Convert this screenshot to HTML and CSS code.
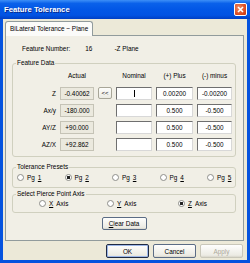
FILE: index.html
```html
<!DOCTYPE html>
<html lang="en">
<head>
    <meta charset="UTF-8">
    <title>Feature Tolerance</title>
    <link rel="stylesheet" href="styles.css">
</head>
<body>
    <div class="window">
        <div class="titlebar">
            <span class="title">Feature Tolerance</span>
            <span class="close">
                <svg width="7" height="7" viewBox="0 0 7 7"><path d="M1 1L6 6M6 1L1 6" stroke="#fff" stroke-width="1.6"/></svg>
            </span>
        </div>

        <div class="client">
            <div class="tabs">
                <span class="tab">BiLateral Tolerance ~ Plane</span>
            </div>

            <div class="panel">
                <div class="feature-number">
                    <span>Feature Number:</span>
                    <span class="fn-value">16</span>
                    <span class="fn-name">-Z Plane</span>
                </div>

                <fieldset class="group">
                    <legend>Feature Data</legend>
                    <div class="data-grid">
                        <span></span>
                        <span class="head">Actual</span>
                        <span></span>
                        <span class="head">Nominal</span>
                        <span class="head">(+) Plus</span>
                        <span class="head">(-) minus</span>

                        <span class="axis">Z</span>
                        <span class="box ro">-0.40062</span>
                        <span class="pick">&lt;&lt;</span>
                        <span class="box edit"><span class="caret"></span></span>
                        <span class="box edit">0.00200</span>
                        <span class="box edit">-0.00200</span>

                        <span class="axis">Ax/y</span>
                        <span class="box ro">-180.000</span>
                        <span></span>
                        <span class="box edit"></span>
                        <span class="box edit">0.500</span>
                        <span class="box edit">-0.500</span>

                        <span class="axis">AY/Z</span>
                        <span class="box ro">+90.000</span>
                        <span></span>
                        <span class="box edit"></span>
                        <span class="box edit">0.500</span>
                        <span class="box edit">-0.500</span>

                        <span class="axis">AZ/X</span>
                        <span class="box ro">+92.862</span>
                        <span></span>
                        <span class="box edit"></span>
                        <span class="box edit">0.500</span>
                        <span class="box edit">-0.500</span>
                    </div>
                </fieldset>

                <fieldset class="group presets">
                    <legend>Tolerance Presets</legend>
                    <div class="radio-row">
                        <span class="radio"><i></i>Pg <u>1</u></span>
                        <span class="radio checked"><i></i>Pg <u>2</u></span>
                        <span class="radio"><i></i>Pg <u>3</u></span>
                        <span class="radio"><i></i>Pg <u>4</u></span>
                        <span class="radio"><i></i>Pg <u>5</u></span>
                    </div>
                </fieldset>

                <fieldset class="group pierce">
                    <legend>Select Pierce Point Axis</legend>
                    <div class="radio-row">
                        <span class="radio"><i></i><u>X</u> Axis</span>
                        <span class="radio"><i></i><u>Y</u> Axis</span>
                        <span class="radio checked"><i></i><u>Z</u> Axis</span>
                    </div>
                </fieldset>

                <div class="clear-row">
                    <span class="btn clear"><u>C</u>lear Data</span>
                </div>
            </div>

            <div class="buttons">
                <span class="btn default">OK</span>
                <span class="btn">Cancel</span>
                <span class="btn disabled">Apply</span>
            </div>
        </div>
    </div>
</body>
</html>
```

FILE: styles.css
```css
* {
    box-sizing: border-box;
}
body {
    margin: 0;
    font-family: "Liberation Sans", Arial, sans-serif;
    font-size: 6.4px;
    color: #000;
}
.window {
    width: 250px;
    height: 263px;
    background: #0553df;
    display: flex;
    flex-direction: column;
}
.titlebar {
    height: 19px;
    display: flex;
    align-items: center;
    justify-content: space-between;
    padding: 0 3px 0 4px;
    background: linear-gradient(#3d8ff7 0%, #0a61ea 18%, #0257e6 50%, #0153e3 80%, #003fc4 100%);
}
.title {
    color: #fff;
    font-weight: bold;
    font-size: 7.7px;
    text-shadow: 1px 1px #0b2a8a;
}
.close {
    width: 13px;
    height: 13px;
    border: 1px solid #fff;
    border-radius: 2px;
    background: radial-gradient(circle at 35% 35%, #f08a62, #d9461d 70%, #c23a12);
    display: flex;
    align-items: center;
    justify-content: center;
}
.client {
    flex: 1;
    margin: 0 3px 3px;
    background: #ece9d8;
    padding: 2px 0 2px 2px;
    display: flex;
    flex-direction: column;
}
.tabs {
    display: flex;
    height: 14px;
}
.tab {
    height: 15px;
    padding: 0 4px;
    border: 1px solid #919b9c;
    border-bottom: none;
    border-radius: 3px 3px 0 0;
    background: #fbfbf9;
    line-height: 13px;
    white-space: nowrap;
    position: relative;
    z-index: 1;
}
.panel {
    flex: 1;
    margin-right: 3px;
    border: 1px solid #919b9c;
    background: #f1efe6;
    padding: 9px 7px 0 6px;
    display: flex;
    flex-direction: column;
}
.feature-number {
    display: flex;
    line-height: 8px;
    margin-left: 10px;
    white-space: nowrap;
}
.fn-value {
    margin-left: 15px;
}
.fn-name {
    margin-left: 22px;
}
.group {
    margin: 6px 0 0;
    padding: 0;
    border: 1px solid #d0d0bf;
    border-radius: 3px;
    min-width: 0;
}
.group legend {
    margin-left: 3px;
    padding: 0 1px;
    line-height: 8px;
    color: #000;
}
.data-grid {
    display: grid;
    grid-template-columns: 43px 34px 14px 36px 37px 35px;
    grid-template-rows: 12px repeat(4, 13px);
    gap: 4px;
    padding: 4px 0 5px;
}
.head {
    text-align: center;
    line-height: 9px;
    white-space: nowrap;
}
.axis {
    text-align: right;
    line-height: 13px;
}
.box {
    display: flex;
    align-items: center;
    justify-content: center;
    border: 1px solid;
}
.box.ro {
    background: #ebe9de;
    border-color: #c5c3b6;
}
.box.edit {
    background: #fff;
    border-color: #6f6f6f #d8d8d8 #d8d8d8 #6f6f6f;
}
.caret {
    width: 1px;
    height: 7px;
    background: #000;
}
.pick {
    height: 12px;
    display: flex;
    align-items: center;
    justify-content: center;
    border: 1px solid #a8a698;
    border-radius: 2px;
    background: linear-gradient(#fdfdfb, #ecebe3);
    font-size: 6px;
}
.presets {
    margin-top: 6px;
}
.presets .radio-row {
    padding: 2px 0 5px 4px;
    grid-template-columns: repeat(4, 47.5px) auto;
}
.pierce {
    margin-top: 2px;
}
.pierce .radio-row {
    padding: 1px 0 4px 26px;
    grid-template-columns: 68px 71px auto;
}
.radio-row {
    display: grid;
}
.radio {
    display: flex;
    align-items: center;
    gap: 3px;
    height: 9px;
    white-space: nowrap;
}
.radio i {
    width: 7px;
    height: 7px;
    border-radius: 50%;
    border: 1px solid #8e8e8a;
    background: #fff;
}
.radio.checked i {
    background: radial-gradient(circle, #222 0 1.4px, #fff 1.9px);
}
.clear-row {
    display: flex;
    justify-content: center;
    margin-top: 4px;
}
.btn {
    display: flex;
    align-items: center;
    justify-content: center;
    height: 13px;
    width: 45px;
    border: 1px solid #5b6c85;
    border-radius: 2px;
    background: linear-gradient(#fefefd, #ecebe4 85%, #d8d6cb);
}
.buttons {
    display: flex;
    justify-content: flex-end;
    gap: 4px;
    margin: 3px 4px 0 0;
}
.buttons .btn {
    width: 43px;
    height: 14px;
}
.btn.default {
    border-color: #1f2a44;
    box-shadow: inset 0 0 0 1px #9db7e8;
}
.btn.disabled {
    color: #aca899;
    border-color: #c9c7ba;
}
```
